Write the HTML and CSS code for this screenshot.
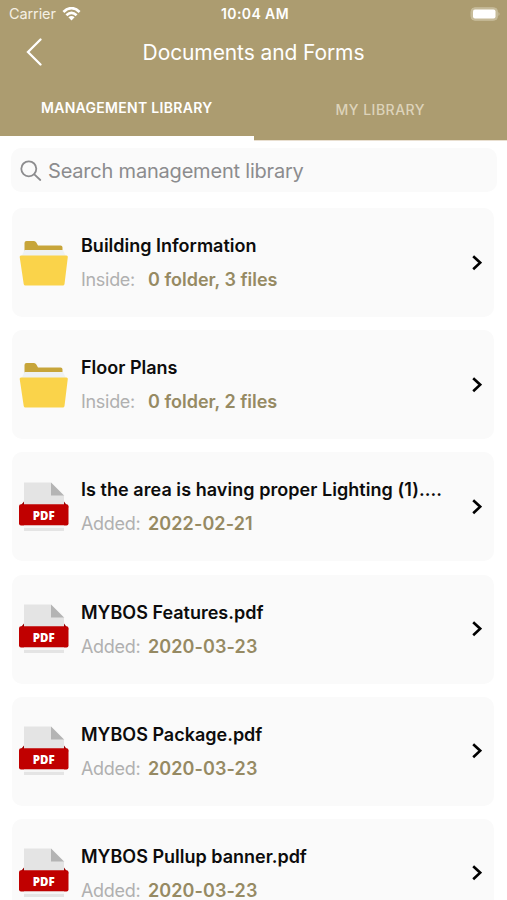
FILE: index.html
```html
<!DOCTYPE html>
<html lang="en">
<head>
  <meta charset="UTF-8" />
  <meta name="viewport" content="width=device-width, initial-scale=1.0" />
  <title>Documents and Forms</title>
  <link rel="stylesheet" href="styles.css">
</head>
<body>
  <!-- shared icons -->
  <svg class="sprite">
    <symbol id="folder" viewBox="0 0 50 50">
      <path fill="#c7a53a" d="M5.500 16V5Q5.500 3 7.500 3h7.500q1.500 0 2.300 1.500L19 7.500h22.500q2 0 2 2V16z" />
      <path fill="#eef1f3" d="M5.500 12h38.500l3 6.500H2.500z" />
      <path fill="#fad34a" d="M2 17.500h45.500q1.500 0 1.300 1.500L45.500 46q-.2 1.500-1.800 1.500H6.500q-1.500 0-1.800-1.500L.7 19q-.2-1.500 1.300-1.500z" />
    </symbol>
    <symbol id="pdf" viewBox="0 0 50 50">
      <path fill="#e4e4e4" d="M5 .5h27L45 13.500v35.500H5z" />
      <path fill="#b4b4b4" d="M32 .5l13 13H32z" />
      <path fill="#910000" d="M5 19.500v6H0zM45 19.500v6h4.500z" />
      <rect x="0" y="22.300" width="49.500" height="21.200" rx="2" fill="#c00000" />
      <path fill="#f5f5f5" d="M5 43.500h40v2.500H5z" />
      <text class="pdf-text" x="24.800" y="37.500" text-anchor="middle">PDF</text>
    </symbol>
    <symbol id="arrow" viewBox="0 0 10 16">
      <path fill="none" stroke="#000" stroke-width="2.600" d="M1.200 1.200L8.200 7.700l-7 6.500" />
    </symbol>
  </svg>

  <header class="header">
    <div class="status-bar">
      <div class="carrier">
        <span class="carrier-name">Carrier</span>
        <svg width="19" height="14" viewBox="0 0 18 14" fill="none" stroke="#fff" stroke-width="2.700">
          <path d="M.9 5Q9-2.600 17.100 5" />
          <path d="M3.900 8.200Q9 3.600 14.100 8.200" />
          <path fill="#fff" stroke="none" d="M5.900 10.300Q9 7.700 12.100 10.300L9 13.500z" />
        </svg>
      </div>
      <span class="time">10:04 AM</span>
      <svg class="battery" width="31" height="14" viewBox="0 0 31 14">
        <rect x="1" y=".7" width="26.500" height="12.600" rx="4" fill="#c6bb99" stroke="#c6bb99" />
        <rect x="3" y="2.500" width="22.500" height="9" rx="2" fill="#fff" />
        <path fill="#cdc3a6" d="M28.500 5q2 2 0 4z" />
      </svg>
    </div>
    <div class="title-bar">
      <svg class="back" width="17" height="28" viewBox="0 0 17 28">
        <path fill="none" stroke="#fff" stroke-width="2.300" stroke-linecap="round" d="M14.500 1.500L2 14l12.500 12.500" />
      </svg>
      <h1>Documents and Forms</h1>
    </div>
    <nav class="tabs">
      <a class="tab active">MANAGEMENT LIBRARY</a>
      <a class="tab">MY LIBRARY</a>
    </nav>
  </header>

  <main>
    <div class="search">
      <svg width="22" height="22" viewBox="0 0 22 22" fill="none" stroke="#8c8c8e" stroke-width="1.800" stroke-linecap="round">
        <circle cx="8.800" cy="8.800" r="7.500" />
        <path d="M14.300 14.300l6 5.700" />
      </svg>
      <span>Search management library</span>
    </div>

    <div class="list">
      <div class="card">
        <svg class="icon"><use href="#folder" /></svg>
        <div class="info">
          <h2>Building Information</h2>
          <p><span class="label">Inside:</span><span class="value">0 folder, 3 files</span></p>
        </div>
        <svg class="arrow"><use href="#arrow" /></svg>
      </div>
      <div class="card">
        <svg class="icon"><use href="#folder" /></svg>
        <div class="info">
          <h2>Floor Plans</h2>
          <p><span class="label">Inside:</span><span class="value">0 folder, 2 files</span></p>
        </div>
        <svg class="arrow"><use href="#arrow" /></svg>
      </div>
      <div class="card">
        <svg class="icon"><use href="#pdf" /></svg>
        <div class="info">
          <h2 class="long">Is the area is having proper Lighting (1)....</h2>
          <p><span class="label">Added:</span><span class="value date">2022-02-21</span></p>
        </div>
        <svg class="arrow"><use href="#arrow" /></svg>
      </div>
      <div class="card">
        <svg class="icon"><use href="#pdf" /></svg>
        <div class="info">
          <h2>MYBOS Features.pdf</h2>
          <p><span class="label">Added:</span><span class="value date">2020-03-23</span></p>
        </div>
        <svg class="arrow"><use href="#arrow" /></svg>
      </div>
      <div class="card">
        <svg class="icon"><use href="#pdf" /></svg>
        <div class="info">
          <h2>MYBOS Package.pdf</h2>
          <p><span class="label">Added:</span><span class="value date">2020-03-23</span></p>
        </div>
        <svg class="arrow"><use href="#arrow" /></svg>
      </div>
      <div class="card">
        <svg class="icon"><use href="#pdf" /></svg>
        <div class="info">
          <h2>MYBOS Pullup banner.pdf</h2>
          <p><span class="label">Added:</span><span class="value date">2020-03-23</span></p>
        </div>
        <svg class="arrow"><use href="#arrow" /></svg>
      </div>
    </div>
  </main>
</body>
</html>
```
FILE: styles.css
```css
* {
  box-sizing: border-box;
}
body {
  margin: 0;
  height: 900px;
  overflow: hidden;
  font-family: Inter, "Liberation Sans", sans-serif;
  background: #fff;
}
h1, h2, p {
  margin: 0;
}
.sprite {
  display: none;
}
.header {
  height: 141px;
  background: #ac9c70;
  color: #fff;
}
.status-bar {
  height: 27px;
  padding: 0 6px 0 9px;
  display: grid;
  grid-template-columns: 1fr auto 1fr;
  align-items: center;
}
.carrier {
  display: flex;
  align-items: center;
  gap: 6px;
}
.carrier-name {
  font-size: 14.5px;
  letter-spacing: -0.1px;
  color: #f5f0e4;
}
.time {
  font-size: 14px;
  font-weight: 600;
  letter-spacing: 0.4px;
}
.battery {
  justify-self: end;
}
.title-bar {
  height: 50px;
  padding: 0 26px;
  display: grid;
  grid-template-columns: 17px 1fr 17px;
  align-items: center;
}
h1 {
  font-size: 21px;
  font-weight: 400;
  letter-spacing: -0.1px;
  text-align: center;
  white-space: nowrap;
}
.tabs {
  height: 64px;
  display: flex;
}
.tab {
  flex: 1;
  height: 64px;
  padding-top: 1px;
  display: flex;
  align-items: center;
  justify-content: center;
  font-size: 14px;
  font-weight: 500;
  letter-spacing: 0.5px;
  color: #ddd3ba;
  border-bottom: 1px solid #e9dfd0;
}
.tab.active {
  padding-top: 1px;
  color: #fff;
  font-weight: 600;
  letter-spacing: 0.3px;
  border-bottom: 5px solid #fff;
}
.search {
  height: 44px;
  margin: 7px 10px 0 11px;
  padding: 2px 9px 0;
  display: flex;
  align-items: center;
  gap: 6px;
  font-size: 20px;
  letter-spacing: -0.2px;
  color: #8c8c8e;
  background: #fafafa;
  border-radius: 10px;
}
.list {
  padding: 16px 13px 0 12px;
  display: flex;
  flex-direction: column;
  gap: 13.2px;
}
.card {
  height: 109px;
  flex-shrink: 0;
  padding: 0 12px 0 7px;
  display: flex;
  align-items: center;
  background: #fafafa;
  border-radius: 10px;
}
.icon {
  width: 50px;
  height: 50px;
}
.info {
  flex: 1;
  margin-left: 12px;
  padding-top: 1px;
}
h2 {
  font-size: 18px;
  font-weight: 600;
  line-height: 24px;
  color: #0c0c0c;
  white-space: nowrap;
}
.long {
  letter-spacing: 0.05px;
}
.info p {
  display: flex;
  margin-top: 10px;
  font-size: 18px;
  line-height: 24px;
}
.label {
  width: 67px;
  letter-spacing: -0.3px;
  color: #b0b0b0;
}
.value {
  font-weight: 600;
  color: #968a63;
}
.date {
  letter-spacing: 0.1px;
}
.arrow {
  width: 10px;
  height: 16px;
}
.pdf-text {
  font-family: "Open Sans", sans-serif;
  font-size: 11.5px;
  font-weight: 800;
  fill: #fff;
}
```
